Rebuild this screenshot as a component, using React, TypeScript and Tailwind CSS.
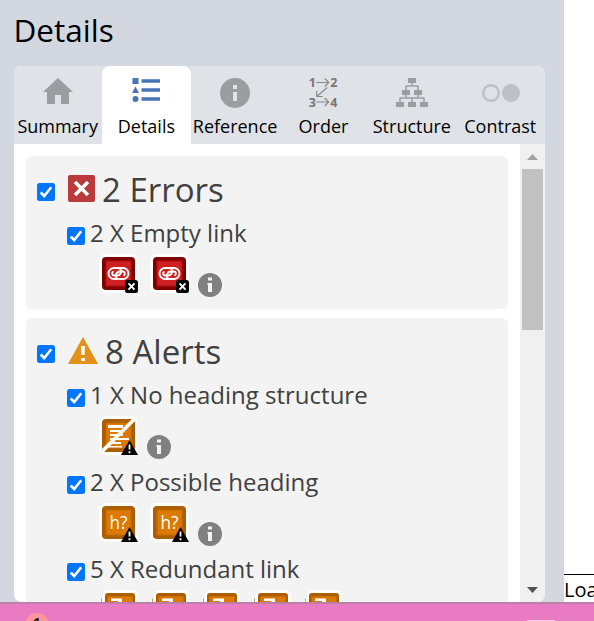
import React from "react";

const Check = () => (
  <svg className="h-[18px] w-[18px] shrink-0" viewBox="0 0 18 18">
    <rect width="18" height="18" rx="2.5" fill="#0075ff" />
    <path d="M3.7 9.5 7.2 13 14.2 4.3" fill="none" stroke="#fff" strokeWidth="2.6" />
  </svg>
);

const Info = () => (
  <svg className="mt-[19px] ml-[9px] h-6 w-6 shrink-0" viewBox="0 0 24 24">
    <circle cx="12" cy="12" r="12" fill="#808080" />
    <path d="M10 4.500h4v3h-4zM9.500 10h4.500v9h-4v-7h-.5z" fill="#f3f3f3" />
  </svg>
);

type Kind = "link" | "noheading" | "heading" | "redundant";

const Glyph = ({ kind }: { kind: Kind }) => {
  const red = kind === "link";
  return (
    <svg className="h-10 w-10 shrink-0" viewBox="0 0 40 40">
      <rect x="0" y="0" width="39" height="39" rx="7" fill="#fff" />
      <rect x="3" y="3" width="33" height="33" rx="4" fill={red ? "#800000" : "#ab5f00"} />
      <rect x="7" y="7" width="25" height="25" fill={red ? "#cf2020" : "#dc7900"} stroke={red ? "#ad1015" : "#c56b00"} />
      {red && (
        <g fill="none" stroke="#fff" strokeWidth="1.9" strokeLinecap="round">
          <path d="M18.300 25H15a5.500 5.500 0 0 1 0-11h3.500c3 0 4.300 2 3.600 4.200-.6 2-2 3.300-4 3.300H15a2 2 0 0 1-1.200-3.500" />
          <path d="M20.700 14H24a5.500 5.500 0 0 1 0 11h-3.500c-3 0-4.300-2-3.600-4.200.6-2 2-3.300 4-3.300H24a2 2 0 0 1 1.200 3.500" />
        </g>
      )}
      {kind === "noheading" && (
        <g>
          <path d="M9 9h15v3H9zM11 14h14v2H11zM11 18h13v2H11zM11 22h19v2H11zM11 26h11v2H11zM9 30h14v1.500H9z" fill="#fff" />
          <path d="M2 36.500 36.500 2" stroke="#fff" strokeWidth="3.800" />
        </g>
      )}
      {kind === "heading" && (
        <text x="10.500" y="26" fill="#fff" fontSize="17.500" textLength="18" lengthAdjust="spacingAndGlyphs" className="font-['Open_Sans',sans-serif]">h?</text>
      )}
      {red ? (
        <g>
          <rect x="26" y="26" width="13" height="13" rx="2.500" fill="#000" />
          <path d="m29.500 29.300 6 6.400m0-6.400-6 6.400" stroke="#fff" strokeWidth="1.900" />
        </g>
      ) : (
        <g>
          <path d="M30.500 24 39 39H22z" fill="#000" />
          <path d="M30.500 28.500v5m0 1.800v2" stroke="#fff" strokeWidth="1.800" />
        </g>
      )}
    </svg>
  );
};

const RedundantGlyph = () => (
  <svg className="h-10 w-10 shrink-0" viewBox="0 0 40 40">
    <path d="M0 40V11l4-3V5a5 5 0 0 1 5-5h25a5 5 0 0 1 5 5v35z" fill="#fff" />
    <path d="M2.500 8.500v20" stroke="#ab5f00" strokeOpacity=".6" />
    <path d="M6 36V6a3 3 0 0 1 3-3h24a3 3 0 0 1 3 3v30z" fill="#ab5f00" />
    <path d="M8.500 34V6.500h25V34z" fill="#dc7900" stroke="#c56b00" />
    <path d="M12 8.500h11V14h-4v-3h-7z" fill="#fff" />
  </svg>
);

const Item = ({ label, kind, count }: { label: string; kind: Kind; count: number }) => (
  <div className="h-[87px]">
    <div className="flex h-[34px] pl-[41px]">
      <div className="pt-[7px]"><Check /></div>
      <span className="-mt-px ml-[5px] text-[24px] leading-[27px] whitespace-nowrap text-[#404040]">{label}</span>
    </div>
    <div className="flex gap-[11px] pl-[73px]">
      {Array.from({ length: count }, (_, i) => kind === "redundant" ? <RedundantGlyph key={i} /> : <Glyph key={i} kind={kind} />)}
      {kind !== "redundant" && <div className="-ml-[12px]"><Info /></div>}
    </div>
  </div>
);

const Group = ({ title, icon, children }: { title: string; icon: React.ReactNode; children: React.ReactNode }) => (
  <section className="mb-[9px] rounded-md bg-[#f3f3f3] pb-[2px]">
    <div className="flex h-[64px] pl-[11px]">
      <div className="pt-[27px]"><Check /></div>
      <div className="ml-[13px] pt-[19px]">{icon}</div>
      <h2 className="ml-[7px] pt-[11px] text-[33px] leading-[46px] text-[#404040]">{title}</h2>
    </div>
    {children}
  </section>
);

const Tab = ({ label, active, children }: { label: string; active?: boolean; children: React.ReactNode }) => (
  <div className={active ? "flex w-[89px] flex-col items-center rounded-t-lg bg-white" : "flex w-[88.4px] flex-col items-center"}>
    <svg className="mt-[9px] h-[36px] w-10 shrink-0" viewBox="0 0 40 36">{children}</svg>
    <span className="mt-[3px] text-[18px] leading-[24px] whitespace-nowrap text-black">{label}</span>
  </div>
);

export default function App() {
  return (
    <div className="flex h-[621px] w-[594px] flex-col overflow-hidden bg-white font-['Open_Sans','Noto_Sans',sans-serif]">
      <div className="flex h-[602px] overflow-hidden">
        <div className="w-[564px] shrink-0 bg-[#d3d8e0] pl-[14px]">
          <h1 className="-ml-px h-[66px] pt-[8px] pl-[0.5px] text-[31.5px] leading-[44px] text-black">Details</h1>
          <div className="h-[536px] w-[531px] overflow-hidden rounded-lg bg-white">
            <div className="-ml-[0.5px] flex h-[78px] w-[532px] bg-[#dfe3e8]">
              <Tab label="Summary">
                <path d="M20 3 35 17h-4v12h-8v-9h-6v9H9V17H5z" fill="#9a9ea1" />
              </Tab>
              <Tab label="Details" active>
                <g fill="#4775b7">
                  <path d="M6.500 3h6v6h-6zM9.500 11.500l3.500 6.500H6zM15.500 4.200h18.500v3.600H15.500zM15.500 13.200h18.500v3.600H15.500zM15.500 22.200h18.500v3.600H15.500z" />
                  <circle cx="9.500" cy="24" r="3" />
                </g>
              </Tab>
              <Tab label="Reference">
                <circle cx="20" cy="18" r="15" fill="#9a9ea1" />
                <path d="M18 10h4v4h-4zM18 17h4v9h-4z" fill="#dfe3e8" />
              </Tab>
              <Tab label="Order">
                <g transform="translate(.7 0)">
                  <g fill="#777" fontSize="12.500" fontWeight="700">
                    <text x="5" y="12">1</text><text x="26.500" y="12">2</text>
                    <text x="5" y="31.500">3</text><text x="26.500" y="31.500">4</text>
                  </g>
                  <path d="M12.500 7.500H25m-4-4 4 4-4 4M23.500 12.500 13 21.500m0-5.500v5.500h6M12.500 27H25m-4-4 4 4-4 4" fill="none" stroke="#888" strokeWidth="1.200" />
                </g>
              </Tab>
              <Tab label="Structure">
                <path d="M16 3h8v5h-8zM10 15h8v5h-8zM22 15h8v5h-8zM4 27h8v5H4zM16 27h8v5h-8zM28 27h8v5h-8z" fill="#9a9ea1" />
                <path d="M20 8v3M14 15v-4h12v4M14 20v3M26 20v3M8 27v-4h24v4M20 23v4" fill="none" stroke="#9a9ea1" strokeWidth="1.500" />
              </Tab>
              <Tab label="Contrast">
                <circle cx="11" cy="18" r="7.800" fill="none" stroke="#bdc1c5" strokeWidth="2.500" />
                <circle cx="31" cy="18" r="9" fill="#bdc1c5" />
              </Tab>
            </div>
            <div className="flex h-[458px] overflow-hidden">
              <div className="w-[506px] overflow-hidden pt-[12px] pr-[12px] pl-[12px]">
                <Group
                  title="2 Errors"
                  icon={
                    <svg className="h-[27px] w-[27px]" viewBox="0 0 27 27">
                      <rect width="27" height="27" rx="2" fill="#bb3a3c" />
                      <path d="m7 7 13 13M20 7 7 20" stroke="#fff" strokeWidth="3.500" />
                    </svg>
                  }
                >
                  <Item label="2 X Empty link" kind="link" count={2} />
                </Group>
                <Group
                  title="8 Alerts"
                  icon={
                    <svg className="h-[27px] w-[30px]" viewBox="0 0 30 27">
                      <path d="M15 0 30 27H0z" fill="#e39119" />
                      <path d="M13 9h4l-.5 9h-3zM13 21h4v3h-4z" fill="#fff" />
                    </svg>
                  }
                >
                  <Item label="1 X No heading structure" kind="noheading" count={1} />
                  <Item label="2 X Possible heading" kind="heading" count={2} />
                  <Item label="5 X Redundant link" kind="redundant" count={5} />
                </Group>
              </div>
              <div className="flex w-[25px] flex-col items-center bg-[#f0f0f0]">
                <svg className="h-[25px] w-[25px] shrink-0" viewBox="0 0 25 25"><path d="M12.500 10 18 16H7z" fill="#a3a3a3" /></svg>
                <div className="h-[161px] w-[21px] bg-[#c1c1c1]" />
                <svg className="mt-auto h-[25px] w-[25px] shrink-0" viewBox="0 0 25 25"><path d="M7 10h11l-5.500 6z" fill="#505050" /></svg>
              </div>
            </div>
          </div>
        </div>
        <div className="flex w-[30px] shrink-0 flex-col justify-end overflow-hidden">
          <div className="h-[28px] border-t border-black text-[20px] leading-[29px] text-black">Loading</div>
        </div>
      </div>
      <div className="flex h-[19px] overflow-hidden border-t-2 border-[#bd7fa7] bg-[#e87bc1]">
        <div className="mt-[9px] ml-[25px] h-6 w-6 shrink-0 rounded-full bg-[#ff949b] pt-[2px] text-center text-[15px] leading-[15px] font-semibold text-black">1</div>
        <div className="mt-[16px] ml-[478px] h-2 w-7 bg-[#f5bfe0]" />
      </div>
    </div>
  );
}
